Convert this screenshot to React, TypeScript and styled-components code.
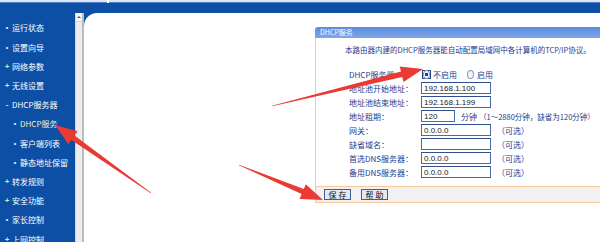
import React from "react";
import styled, { createGlobalStyle } from "styled-components";

const Global = createGlobalStyle`
  html, body { margin: 0; padding: 0; width: 600px; height: 242px; overflow: hidden; background: #fff; }
  body { font-family: "Noto Sans CJK SC", "Liberation Sans", sans-serif; }
  * { box-sizing: border-box; }
`;

const Page = styled.div`
  position: relative;
  width: 600px;
  height: 242px;
  overflow: hidden;
  display: flex;
  flex-direction: column;
  background: #0d4fa5;
`;

const TopStrip = styled.div`
  display: flex;
  gap: 2px;
  height: 3px;
  background: #ffffff;
`;

const TopSeg = styled.div<{ $w?: number }>`
  ${(p) => (p.$w ? `width: ${p.$w}px;` : "flex: 1;")}
  background: #dce6f5;
  border-bottom: 1px solid #4f7fc4;
`;

const Main = styled.div`
  flex: 1;
  display: flex;
  min-height: 0;
`;

const Sidebar = styled.nav`
  width: 75px;
  flex-shrink: 0;
  padding-top: 15.4px;
  display: flex;
  flex-direction: column;
`;

const NavItem = styled.div<{ $level: number; $active?: boolean }>`
  height: 19.2px;
  flex-shrink: 0;
  display: flex;
  align-items: center;
  gap: 2px;
  padding-left: ${(p) => (p.$level ? 12 : 4)}px;
  font-size: 8px;
  color: ${(p) => (p.$active ? "#f4f0c4" : "#ffffff")};
  white-space: nowrap;
`;

const Bullet = styled.span<{ $kind: "dot" | "plus" | "minus" }>`
  width: 6px;
  display: inline-flex;
  justify-content: center;
  align-items: center;
  font-family: "Liberation Sans", sans-serif;
  font-weight: bold;
  font-size: ${(p) => (p.$kind === "dot" ? 7 : 8)}px;
  color: ${(p) => (p.$kind === "plus" ? "#c9f0b8" : "#e8f0ff")};
`;

const Scrollbar = styled.div`
  width: 9px;
  flex-shrink: 0;
  margin-top: 10px;
  background: #ececec;
  border-left: 1px solid #d6d6d6;
  border-right: 2px solid #bcbcbc;
  display: flex;
  flex-direction: column;
`;

const ScrollUp = styled.div`
  height: 9px;
  display: flex;
  justify-content: center;
  padding-top: 3px;
  background: #f6f6f6;
  border-bottom: 1px solid #d2d2d2;
  &::before {
    content: "";
    width: 0;
    height: 0;
    border-left: 2px solid transparent;
    border-right: 2px solid transparent;
    border-bottom: 2px solid #555;
  }
`;

const Content = styled.main`
  flex: 1;
  min-width: 0;
  margin-top: 10px;
  background: #ffffff;
  border-top-left-radius: 13px;
  padding: 14px 0 0 231px;
  overflow: hidden;
  display: flex;
  align-items: flex-start;
`;

const Panel = styled.section`
  width: 285px;
  flex-shrink: 0;
  display: flex;
  flex-direction: column;
`;

const PanelHeader = styled.div`
  height: 11px;
  background: linear-gradient(#5b8ce0, #7fa7ea);
  border-top-left-radius: 3px;
  color: #ffffff;
  font-size: 7px;
  line-height: 11px;
  padding-left: 5px;
  white-space: nowrap;
`;

const PanelBody = styled.div`
  border-left: 1px solid #f6c89a;
  padding: 6px 0 7px 29px;
`;

const Desc = styled.p`
  margin: 0;
  font-size: 7.5px;
  line-height: 12px;
  color: #1b3d8f;
  white-space: nowrap;
`;

const Form = styled.div`
  margin: 11px 0 0 4px;
  display: grid;
  grid-template-columns: 72px auto;
  grid-auto-rows: 14px;
  align-items: center;
`;

const Label = styled.span`
  font-size: 8px;
  color: #1b3d8f;
  white-space: nowrap;
`;

const Field = styled.div`
  display: flex;
  align-items: center;
  gap: 6px;
  font-size: 8px;
  color: #1b3d8f;
  white-space: nowrap;
`;

const Hint = styled.span`
  margin-left: -4px;
  font-size: 7.5px;
`;

const TextBox = styled.input<{ $w: number }>`
  width: ${(p) => p.$w}px;
  height: 12px;
  margin: 0;
  padding: 0 2px;
  border: 1px solid #4a6aa6;
  border-top-color: #2f4f8e;
  background: #ffffff;
  font-family: "Liberation Sans", sans-serif;
  font-size: 8px;
  color: #222;
  outline: none;
`;

const RadioGroup = styled.div`
  display: flex;
  align-items: center;
  gap: 9px;
  padding-left: 1px;
`;

const RadioOption = styled.label`
  display: flex;
  align-items: center;
  gap: 2px;
  font-size: 8px;
  color: #1b3d8f;
`;

const RadioRing = styled.span<{ $checked?: boolean }>`
  width: 9px;
  height: 9px;
  display: inline-flex;
  align-items: center;
  justify-content: center;
  border: 1px solid ${(p) => (p.$checked ? "#25468a" : "transparent")};
  &::before {
    content: "";
    width: 7px;
    height: 7px;
    border-radius: 50%;
    border: 1px solid #8a9bb5;
    background: ${(p) =>
      p.$checked
        ? "radial-gradient(circle, #203c7a 0 1.4px, #f4f6fa 1.6px)"
        : "#f4f6fa"};
  }
`;

const Footer = styled.div`
  height: 17px;
  border: 1px solid #f6c89a;
  border-right: none;
  background: #f1f1f1;
  display: flex;
  align-items: flex-start;
  gap: 10px;
  padding: 2px 0 0 8px;
`;

const Button = styled.button<{ $w: number }>`
  width: ${(p) => p.$w}px;
  height: 11px;
  margin: 0;
  padding: 0;
  border: 1px solid #3d5f9e;
  background: #e3e8f1;
  font-family: "Noto Sans CJK SC", sans-serif;
  font-size: 8px;
  line-height: 9px;
  letter-spacing: 2px;
  text-indent: 2px;
  color: #111;
`;

const Overlay = styled.svg`
  position: absolute;
  left: 0;
  top: 0;
  width: 600px;
  height: 242px;
  pointer-events: none;
`;

type Pt = [number, number];

function arrowPoints(tail: Pt, tip: Pt, L = 20, H = 7, w1 = 5, w0 = 0.6): string {
  const dx = tip[0] - tail[0];
  const dy = tip[1] - tail[1];
  const len = Math.hypot(dx, dy);
  const ux = dx / len;
  const uy = dy / len;
  const nx = -uy;
  const ny = ux;
  const bx = tip[0] - ux * L;
  const by = tip[1] - uy * L;
  const pts: Pt[] = [
    [tail[0] + (nx * w0) / 2, tail[1] + (ny * w0) / 2],
    [bx + (nx * w1) / 2, by + (ny * w1) / 2],
    [bx + nx * H, by + ny * H],
    tip,
    [bx - nx * H, by - ny * H],
    [bx - (nx * w1) / 2, by - (ny * w1) / 2],
    [tail[0] - (nx * w0) / 2, tail[1] - (ny * w0) / 2],
  ];
  return pts.map((p) => `${p[0].toFixed(1)},${p[1].toFixed(1)}`).join(" ");
}

const nav: { text: string; level: number; bullet: "dot" | "plus" | "minus"; active?: boolean }[] = [
  { text: "运行状态", level: 0, bullet: "dot" },
  { text: "设置向导", level: 0, bullet: "dot" },
  { text: "网络参数", level: 0, bullet: "plus" },
  { text: "无线设置", level: 0, bullet: "plus" },
  { text: "DHCP服务器", level: 0, bullet: "minus" },
  { text: "DHCP服务", level: 1, bullet: "dot", active: true },
  { text: "客户端列表", level: 1, bullet: "dot" },
  { text: "静态地址保留", level: 1, bullet: "dot" },
  { text: "转发规则", level: 0, bullet: "plus" },
  { text: "安全功能", level: 0, bullet: "plus" },
  { text: "家长控制", level: 0, bullet: "dot" },
  { text: "上网控制", level: 0, bullet: "plus" },
];

const bulletChar = { dot: "•", plus: "+", minus: "-" };

const fields: { label: string; value: string; w: number; suffix?: string; hint?: string }[] = [
  { label: "地址池开始地址：", value: "192.168.1.100", w: 70 },
  { label: "地址池结束地址：", value: "192.168.1.199", w: 70 },
  { label: "地址租期：", value: "120", w: 34, suffix: "分钟", hint: "（1～2880分钟，缺省为120分钟）" },
  { label: "网关：", value: "0.0.0.0", w: 70, suffix: "（可选）" },
  { label: "缺省域名：", value: "", w: 70, suffix: "（可选）" },
  { label: "首选DNS服务器：", value: "0.0.0.0", w: 70, suffix: "（可选）" },
  { label: "备用DNS服务器：", value: "0.0.0.0", w: 70, suffix: "（可选）" },
];

export default function App() {
  return (
    <Page>
      <Global />
      <TopStrip>
        <TopSeg $w={107} />
        <TopSeg />
      </TopStrip>
      <Main>
        <Sidebar>
          {nav.map((n) => (
            <NavItem key={n.text} $level={n.level} $active={n.active}>
              <Bullet $kind={n.bullet}>{bulletChar[n.bullet]}</Bullet>
              {n.text}
            </NavItem>
          ))}
        </Sidebar>
        <Scrollbar>
          <ScrollUp />
        </Scrollbar>
        <Content>
          <Panel>
            <PanelHeader>DHCP服务</PanelHeader>
            <PanelBody>
              <Desc>本路由器内建的DHCP服务器能自动配置局域网中各计算机的TCP/IP协议。</Desc>
              <Form>
                <Label>DHCP服务器：</Label>
                <RadioGroup>
                  <RadioOption>
                    <RadioRing $checked />
                    不启用
                  </RadioOption>
                  <RadioOption>
                    <RadioRing />
                    启用
                  </RadioOption>
                </RadioGroup>
                {fields.map((f) => (
                  <React.Fragment key={f.label}>
                    <Label>{f.label}</Label>
                    <Field>
                      <TextBox $w={f.w} defaultValue={f.value} readOnly />
                      {f.suffix && <span>{f.suffix}</span>}
                      {f.hint && <Hint>{f.hint}</Hint>}
                    </Field>
                  </React.Fragment>
                ))}
              </Form>
            </PanelBody>
            <Footer>
              <Button $w={27}>保存</Button>
              <Button $w={27}>帮助</Button>
            </Footer>
          </Panel>
        </Content>
      </Main>
      <Overlay viewBox="0 0 600 242">
        <polygon points={arrowPoints([272, 106], [423, 69], 22, 8, 5.5)} fill="#ea3a34" />
        <polygon points={arrowPoints([151, 193], [55, 125], 22, 8, 5.5)} fill="#ea3a34" />
        <polygon points={arrowPoints([239, 165], [323, 200], 22, 8, 5.5)} fill="#ea3a34" />
      </Overlay>
    </Page>
  );
}
